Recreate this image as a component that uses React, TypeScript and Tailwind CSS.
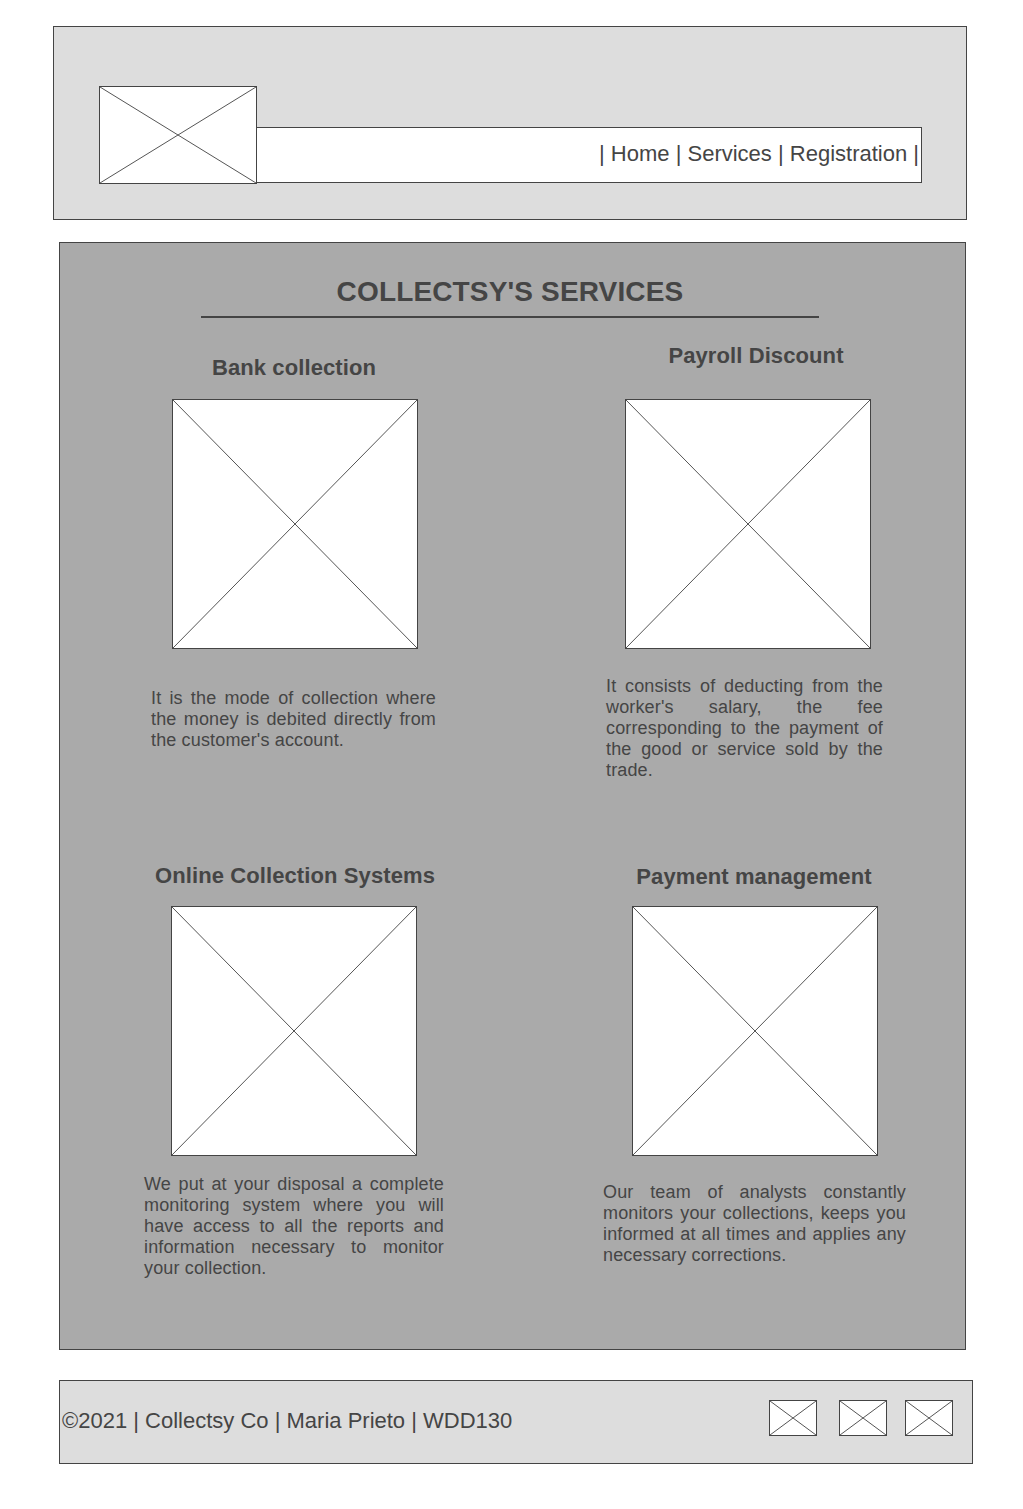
import React from 'react'

const textColor = 'text-[#454545]'

function Placeholder({ className }: { className: string }) {
  return (
    <div className={`border border-[#444] bg-white ${className}`}>
      <svg
        className="block h-full w-full"
        viewBox="0 0 100 100"
        preserveAspectRatio="none"
      >
        <line x1="0" y1="0" x2="100" y2="100" stroke="#555" strokeWidth="1" vectorEffect="non-scaling-stroke" />
        <line x1="100" y1="0" x2="0" y2="100" stroke="#555" strokeWidth="1" vectorEffect="non-scaling-stroke" />
      </svg>
    </div>
  )
}

type Service = {
  title: string
  text: string
  headingClass: string
  imageClass: string
  textClass: string
}

const rowOne: Service[] = [
  {
    title: 'Bank collection',
    text: "It is the mode of collection where the money is debited directly from the customer's account.",
    headingClass: 'mt-[37px] ml-[84px]',
    imageClass: 'mt-[18px] ml-[112px]',
    textClass: 'mt-[39px] ml-[91px] w-[285px]'
  },
  {
    title: 'Payroll Discount',
    text: "It consists of deducting from the worker's salary, the fee corresponding to the payment of the good or service sold by the trade.",
    headingClass: 'mt-[25px] ml-[86px]',
    imageClass: 'mt-[30px] ml-[105px]',
    textClass: 'mt-[27px] ml-[86px] w-[277px]'
  }
]

const rowTwo: Service[] = [
  {
    title: 'Online Collection Systems',
    text: 'We put at your disposal a complete monitoring system where you will have access to all the reports and information necessary to monitor your collection.',
    headingClass: 'mt-[23px] ml-[85px]',
    imageClass: 'mt-[17px] ml-[111px]',
    textClass: 'mt-[18px] ml-[84px] w-[300px]'
  },
  {
    title: 'Payment management',
    text: 'Our team of analysts constantly monitors your collections, keeps you informed at all times and applies any necessary corrections.',
    headingClass: 'mt-[24px] ml-[84px]',
    imageClass: 'mt-[16px] ml-[112px]',
    textClass: 'mt-[26px] ml-[83px] w-[303px]'
  }
]

function ServiceCard({ service }: { service: Service }) {
  return (
    <div className="flex flex-col items-start">
      <h2
        className={`w-[300px] text-center text-[22px] leading-[26px] font-bold tracking-[0.1px] ${textColor} ${service.headingClass}`}
      >
        {service.title}
      </h2>
      <Placeholder className={`h-[250px] w-[246px] ${service.imageClass}`} />
      <p
        className={`text-justify text-[18px] leading-[21px] tracking-[0.15px] ${textColor} ${service.textClass}`}
      >
        {service.text}
      </p>
    </div>
  )
}

export default function App() {
  return (
    <div className="min-h-[1509px] bg-white pt-[26px] font-['Liberation_Sans',Arial,sans-serif]">
      <header className="ml-[53px] h-[194px] w-[914px] border border-[#444] bg-[#dddddd] pt-[59px] pl-[45px]">
        <div className="flex items-end">
          <Placeholder className="h-[98px] w-[158px]" />
          <nav
            className={`mb-[1px] flex h-[56px] w-[665px] items-center justify-end border border-l-0 border-[#444] bg-white pr-[2px] pb-[4px] text-[22px] ${textColor}`}
          >
            | Home | Services | Registration |
          </nav>
        </div>
      </header>

      <main className="mt-[22px] ml-[59px] h-[1108px] w-[907px] border border-[#444] bg-[#aaaaaa]">
        <div className="mt-[33px] ml-[141px] w-[618px]">
          <h1
            className={`text-center text-[28px] leading-[32px] font-bold tracking-[0.15px] ${textColor}`}
          >
            COLLECTSY'S SERVICES
          </h1>
          <div className="mt-[8px] h-[2px] bg-[#444]" />
        </div>

        <div className="grid h-[522px] grid-cols-[460px_1fr]">
          {rowOne.map((s) => (
            <ServiceCard key={s.title} service={s} />
          ))}
        </div>
        <div className="grid grid-cols-[460px_1fr]">
          {rowTwo.map((s) => (
            <ServiceCard key={s.title} service={s} />
          ))}
        </div>
      </main>

      <footer
        className={`mt-[30px] ml-[59px] flex h-[84px] w-[914px] items-center border border-[#444] bg-[#dddddd] pr-[19px] pl-[2px] text-[22px] ${textColor}`}
      >
        <span className="mb-[4px]">©2021 | Collectsy Co | Maria Prieto | WDD130</span>
        <div className="mb-[8px] ml-auto flex items-center">
          <Placeholder className="h-[36px] w-[48px]" />
          <Placeholder className="ml-[22px] h-[36px] w-[48px]" />
          <Placeholder className="ml-[18px] h-[36px] w-[48px]" />
        </div>
      </footer>
    </div>
  )
}
